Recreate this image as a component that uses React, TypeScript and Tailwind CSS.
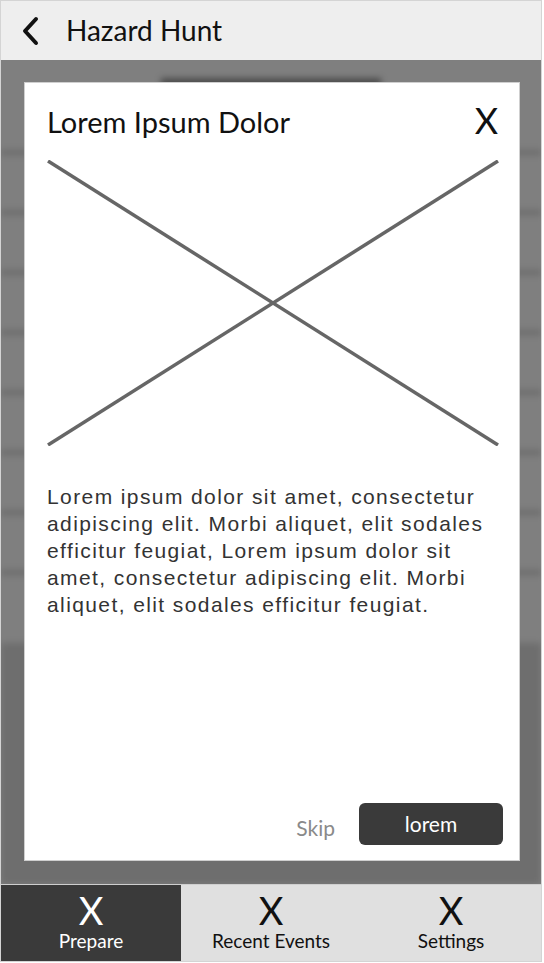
import React from "react";

const gill = { fontFamily: "Lato, 'Open Sans', sans-serif" };
const helv = { fontFamily: "'Liberation Sans', Arial, sans-serif" };

function Tab({ label, active }: { label: string; active?: boolean }) {
  return (
    <div
      className={`flex-1 flex flex-col items-center pt-[6px] ${active ? "bg-[#3a3a3a] text-white" : "bg-[#e0e0e0] text-[#111]"}`}
      style={gill}
    >
      <span className="text-[38px] leading-[38px]">X</span>
      <span className="text-[19px] leading-[22px] mt-[1px]">{label}</span>
    </div>
  );
}

export default function App() {
  const bands = [150, 210, 270, 330, 390, 450, 510, 570];
  return (
    <div className="w-[544px] h-[963px] bg-white">
      <div className="w-[542px] h-[962px] border border-[#d4d4d4] flex flex-col">
        {/* Header */}
        <div className="h-[59px] bg-[#eeeeee] flex items-center shrink-0">
          <svg width="20" height="30" viewBox="0 0 20 30" className="ml-[19px]">
            <path d="M16 3 L5 15 L16 27" fill="none" stroke="#111" strokeWidth="4" strokeLinecap="round" strokeLinejoin="round" />
          </svg>
          <span className="ml-[26px] text-[28px] text-[#111] leading-none pb-[2px]" style={gill}>
            Hazard Hunt
          </span>
        </div>

        {/* Content area with overlay */}
        <div className="relative flex-1 overflow-hidden">
          {/* background content (blurred) */}
          <div className="absolute inset-0 flex flex-col blur-[3px]">
            <div className="h-[583px] bg-[#fefefe] relative">
              <div className="mx-auto mt-[18px] w-[220px] h-[10px] bg-[#9a9a9a]" />
              {bands.map((y) => (
                <div key={y} className="absolute left-0 right-0 h-[5px] bg-[#d6d6d6]" style={{ top: y - 60 }} />
              ))}
            </div>
            <div className="flex-1 bg-[#dcdcdc]" />
          </div>
          <div className="absolute inset-0 bg-black/50" />

          {/* Modal */}
          <div className="relative mt-[22px] ml-[23px] w-[496px] h-[779px] bg-white border border-[#cfcfcf] flex flex-col">
            <div className="flex items-start justify-between pl-[22px] pr-[21px] pt-[19px]">
              <span className="text-[29px] text-[#111] leading-[36px] mt-[2px]" style={gill}>
                Lorem Ipsum Dolor
              </span>
              <span className="text-[36px] text-[#111] leading-[36px]" style={gill}>
                X
              </span>
            </div>
            <svg width="452" height="286" viewBox="0 0 452 286" className="ml-[22px] mt-[20px]">
              <line x1="1" y1="1" x2="451" y2="285" stroke="#666" strokeWidth="3.5" />
              <line x1="1" y1="285" x2="451" y2="1" stroke="#666" strokeWidth="3.5" />
            </svg>
            <p className="mx-[22px] mt-[37px] text-[21px] leading-[27px] tracking-[1.4px] text-[#333]" style={helv}>
              Lorem ipsum dolor sit amet, consectetur adipiscing elit. Morbi aliquet, elit sodales efficitur feugiat, Lorem ipsum dolor sit amet, consectetur adipiscing elit. Morbi aliquet, elit sodales efficitur feugiat.
            </p>
            <div className="mt-auto mb-[15px] flex items-center justify-end pr-[16px]">
              <span className="text-[21px] text-[#8a8a8a] mr-[24px] mt-[8px]" style={gill}>
                Skip
              </span>
              <button className="w-[144px] h-[42px] rounded-[6px] bg-[#3a3a3a] text-white text-[21px]" style={gill}>
                lorem
              </button>
            </div>
          </div>
        </div>

        {/* Tab bar */}
        <div className="h-[77px] shrink-0 flex border-t border-[#cfcfcf]">
          <Tab label="Prepare" active />
          <Tab label="Recent Events" />
          <Tab label="Settings" />
        </div>
      </div>
    </div>
  );
}
